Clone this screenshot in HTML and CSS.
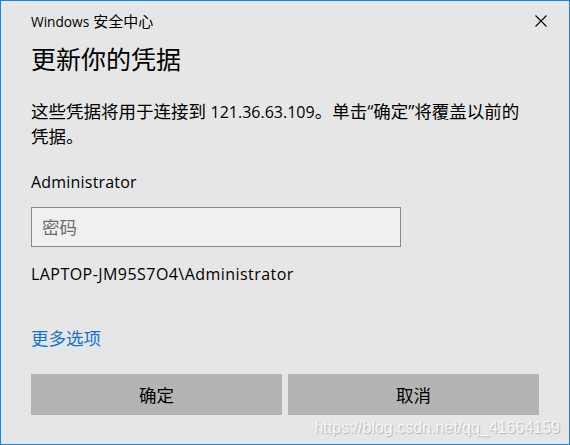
FILE: index.html
```html
<!DOCTYPE html>
<html lang="zh-CN">
<head>
<meta charset="utf-8">
<title>Windows 安全中心</title>
<link rel="stylesheet" href="styles.css">
</head>
<body>
<div class="dialog">
  <div class="titlebar">
    <span class="title"><span class="en">Windows</span> 安全中心</span>
    <svg class="close" width="12" height="12" viewBox="0 0 12 12" aria-label="关闭">
      <path d="M0.5 0.5 L11.5 11.5 M11.5 0.5 L0.5 11.5" stroke="#000" stroke-width="1.1" fill="none"/>
    </svg>
  </div>
  <h1 class="heading">更新你的凭据</h1>
  <p class="message">这些凭据将用于连接到 <span class="en">121.36.63.109</span>。单击“确定”将覆盖以前的凭据。</p>
  <div class="user"><span class="en">Administrator</span></div>
  <input class="password" type="password" placeholder="密码">
  <div class="account"><span class="en">LAPTOP-JM95S7O4\Administrator</span></div>
  <a class="more" href="#">更多选项</a>
  <div class="actions">
    <button class="btn">确定</button>
    <button class="btn">取消</button>
  </div>
  <div class="watermark">https://blog.csdn.net/qq_41664159</div>
</div>
</body>
</html>
```
FILE: styles.css
```css
html, body {
  margin: 0;
  padding: 0;
}

body {
  font-family: "Open Sans", "Noto Sans CJK SC", sans-serif;
  color: #000;
  background: #e6e6e6;
}

.dialog {
  position: relative;
  box-sizing: border-box;
  width: 570px;
  height: 445px;
  border: 1px solid #1883d7;
  background: #e6e6e6;
  padding: 0 30px;
  display: flex;
  flex-direction: column;
  align-items: flex-start;
  font-size: 17.5px;
}

.en {
  font-size: 16px;
}

.titlebar {
  align-self: stretch;
  height: 40px;
  margin-right: -8px;
  display: flex;
  align-items: center;
  justify-content: space-between;
}

.title {
  font-size: 15px;
  line-height: 20px;
}

.title .en {
  font-size: 13.7px;
}

.close {
  display: block;
}

.heading {
  margin: 1px 0 0;
  font-size: 25px;
  font-weight: normal;
  line-height: 34px;
}

.message {
  margin: 23px 0 0;
  max-width: 500px;
  line-height: 24px;
}

.user {
  margin-top: 21px;
  line-height: 24px;
  letter-spacing: 0.2px;
}

.password {
  margin-top: 13px;
  box-sizing: border-box;
  width: 370px;
  height: 40px;
  border: 1px solid #8a8a8a;
  background: #f0f0f0;
  padding: 0 10px;
  font-family: inherit;
  font-size: 17.5px;
  color: #000;
  outline: none;
}

.password::placeholder {
  color: #6d6d6d;
}

.account {
  margin-top: 14px;
  line-height: 24px;
  letter-spacing: 0.45px;
}

.more {
  margin-top: 40px;
  line-height: 24px;
  color: #1473d4;
  text-decoration: none;
}

.actions {
  align-self: stretch;
  margin-top: 24px;
  display: grid;
  grid-template-columns: 1fr 1fr;
  gap: 6px;
}

.btn {
  height: 41px;
  border: none;
  background: #b4b4b4;
  font-family: inherit;
  font-size: 17.5px;
  color: #000;
  padding: 0;
}

.watermark {
  position: absolute;
  right: 9px;
  bottom: 6px;
  font-family: "Liberation Sans", Arial, sans-serif;
  font-size: 16px;
  line-height: 20px;
  color: #f6f6f6;
  text-shadow: 1px 1px 1px rgba(0, 0, 0, 0.22);
}
```
